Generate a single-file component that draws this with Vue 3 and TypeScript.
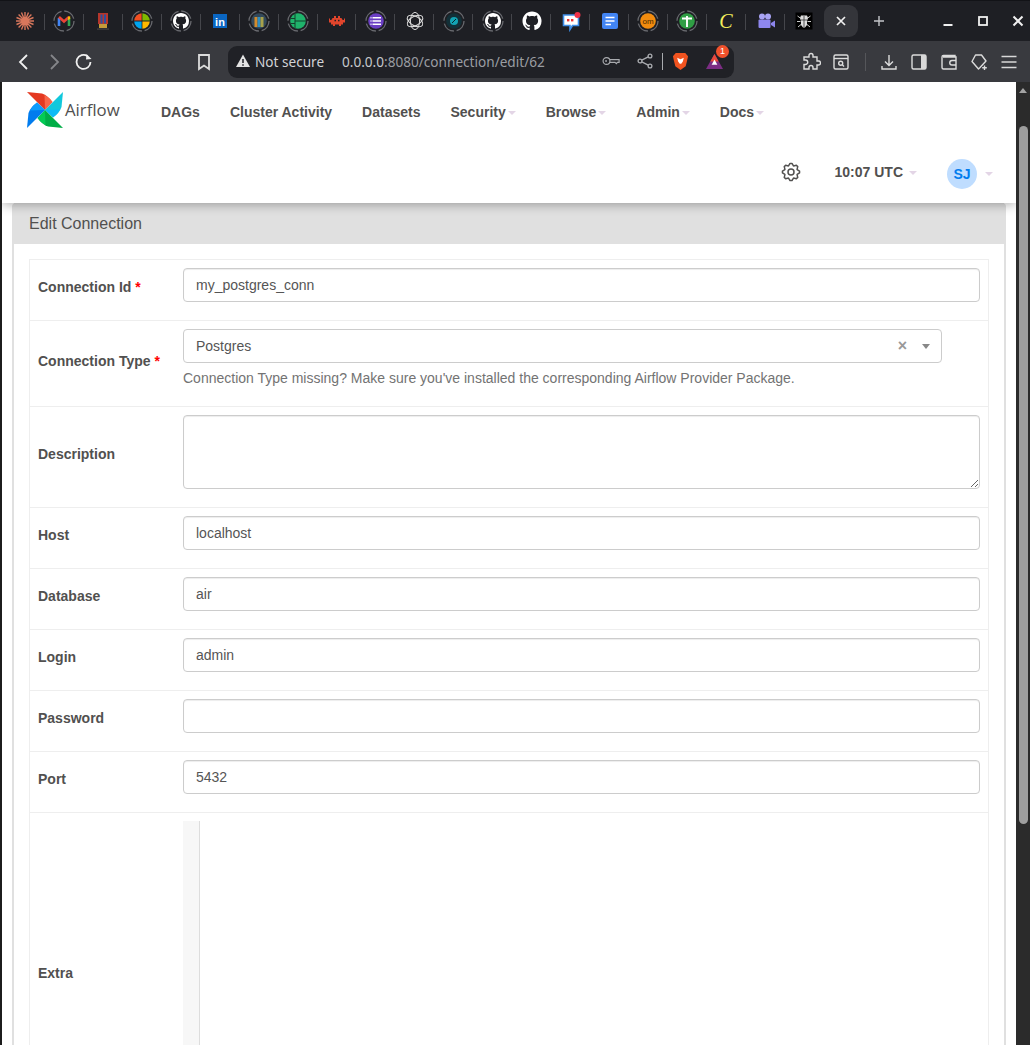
<script setup lang="ts">
// Eight pointed gear outline for the settings button
const gearPath = (() => {
  const pts: string[] = [];
  for (let i = 0; i < 8; i++) {
    const a = (Math.PI / 4) * i - Math.PI / 2;
    const step = Math.PI / 11;
    const corners: [number, number][] = [
      [6.6, a - step * 1.35],
      [8.6, a - step * 0.4],
      [8.6, a + step * 0.4],
      [6.6, a + step * 1.35],
    ];
    for (const [r, t] of corners) {
      pts.push(`${(10 + r * Math.cos(t)).toFixed(2)} ${(10 + r * Math.sin(t)).toFixed(2)}`);
    }
  }
  return `M${pts.join('L')}Z`;
})();

const github =
  'M8 0C3.58 0 0 3.58 0 8c0 3.54 2.29 6.53 5.47 7.59.4.07.55-.17.55-.38 0-.19-.01-.82-.01-1.49-2.01.37-2.53-.49-2.69-.94-.09-.23-.48-.94-.82-1.13-.28-.15-.68-.52-.01-.53.63-.01 1.08.58 1.23.82.72 1.21 1.87.87 2.33.66.07-.52.28-.87.51-1.07-1.78-.2-3.64-.89-3.64-3.95 0-.87.31-1.59.82-2.15-.08-.2-.36-1.02.08-2.12 0 0 .67-.21 2.2.82.64-.18 1.32-.27 2-.27.68 0 1.36.09 2 .27 1.53-1.04 2.2-.82 2.2-.82.44 1.1.16 1.92.08 2.12.51.56.82 1.28.82 2.15 0 3.07-1.87 3.75-3.65 3.95.29.25.54.73.54 1.48 0 1.07-.01 1.93-.01 2.2 0 .21.15.46.55.38A8.013 8.013 0 0016 8c0-4.42-3.58-8-8-8z';

const navItems = [
  { label: 'DAGs', caret: false },
  { label: 'Cluster Activity', caret: false },
  { label: 'Datasets', caret: false },
  { label: 'Security', caret: true },
  { label: 'Browse', caret: true },
  { label: 'Admin', caret: true },
  { label: 'Docs', caret: true },
];

const fields = [
  { label: 'Connection Id', kind: 'input', value: 'my_postgres_conn', required: true },
  { label: 'Connection Type', kind: 'select', value: 'Postgres', required: true },
  { label: 'Description', kind: 'textarea', value: '', required: false },
  { label: 'Host', kind: 'input', value: 'localhost', required: false },
  { label: 'Database', kind: 'input', value: 'air', required: false },
  { label: 'Login', kind: 'input', value: 'admin', required: false },
  { label: 'Password', kind: 'input', value: '', required: false },
  { label: 'Port', kind: 'input', value: '5432', required: false },
  { label: 'Extra', kind: 'code', value: '', required: false },
];

const ringDash = '12.9 2.8';
</script>

<template>
  <div class="screen">
    <!-- Browser tab strip: a row of pinned tabs -->
    <div class="tabstrip">
      <div class="pin"><svg viewBox="0 0 24 24"><path d="M12 3V21M3 12H21M5.6 5.6L18.4 18.4M5.6 18.4L18.4 5.6M8.5 3.5L15.5 20.5M15.5 3.5L8.5 20.5M3.5 8.5L20.5 15.5M3.5 15.5L20.5 8.5" stroke="#d8775c" stroke-width="1.4" fill="none" /></svg></div>
      <div class="pin"><svg viewBox="0 0 24 24"><circle cx="12" cy="12" r="10" class="ring" :stroke-dasharray="ringDash" /><path d="M7 17V9" stroke="#4285f4" stroke-width="2.6" /><path d="M7 8L12 12.5L17 8" stroke="#ea4335" stroke-width="2.6" fill="none" /><path d="M17 9V17" stroke="#34a853" stroke-width="2.6" /><path d="M16 7.6L18.2 7.2V10L16 11Z" fill="#fbbc04" /></svg></div>
      <div class="pin"><svg viewBox="0 0 24 24"><rect x="7" y="4" width="10" height="11" fill="#b5362c" /><rect x="9.5" y="5.5" width="2" height="9" fill="#2c4f9e" /><rect x="13" y="5.5" width="2" height="9" fill="#2c4f9e" /><rect x="8" y="15" width="8" height="4" fill="#c49a3a" /><rect x="6" y="19.5" width="12" height="1.2" fill="#444" /></svg></div>
      <div class="pin"><svg viewBox="0 0 24 24"><circle cx="12" cy="12" r="10" class="ring" :stroke-dasharray="ringDash" /><path d="M11.6 11.6V4.2A7.8 7.8 0 0 0 4.2 11.6Z" fill="#f25022" /><path d="M12.4 11.6V4.2A7.8 7.8 0 0 1 19.8 11.6Z" fill="#7fba00" /><path d="M11.6 12.4V19.8A7.8 7.8 0 0 1 4.2 12.4Z" fill="#00a4ef" /><path d="M12.4 12.4V19.8A7.8 7.8 0 0 0 19.8 12.4Z" fill="#ffb900" /></svg></div>
      <div class="pin"><svg viewBox="0 0 24 24"><circle cx="12" cy="12" r="10" class="ring" :stroke-dasharray="ringDash" /><path :d="github" fill="#fff" transform="translate(4 4)" /></svg></div>
      <div class="pin"><svg viewBox="0 0 24 24"><rect x="5" y="5" width="14" height="14" fill="#0a66c2" /><text x="12" y="16.5" text-anchor="middle" class="in">in</text></svg></div>
      <div class="pin"><svg viewBox="0 0 24 24"><circle cx="12" cy="12" r="10" class="ring" :stroke-dasharray="ringDash" /><circle cx="12" cy="12" r="7.8" fill="#33495a" /><path d="M7.5 8H10.5V18H7.5Z" fill="#d38b2c" /><path d="M10.6 8H13.4V18H10.6Z" fill="#2f8fc2" /><path d="M13.5 8H16.5V18H13.5Z" fill="#a9a24a" /></svg></div>
      <div class="pin"><svg viewBox="0 0 24 24"><circle cx="12" cy="12" r="10" class="ring" :stroke-dasharray="ringDash" /><circle cx="12" cy="12" r="7.8" fill="#1fb36b" /><path d="M9 5V19M9 12H20M4.5 9.5H9M4.5 14.5H9" stroke="#14402c" stroke-width="1" /></svg></div>
      <div class="pin"><svg viewBox="0 0 24 24"><path d="M9 7H11V9H13V7H15V9H16.5C17 10 17.5 11 18 11H19V9.5H20V13.5H18V15.5H16V17H14V15.5H10V17H8V15.5H6V13.5H4V9.5H5V11H6C6.5 11 7 10 7.5 9H9Z" fill="#e0452c" /><rect x="9.5" y="10.8" width="1.5" height="1.5" fill="#1f2025" /><rect x="13" y="10.8" width="1.5" height="1.5" fill="#1f2025" /></svg></div>
      <div class="pin"><svg viewBox="0 0 24 24"><circle cx="12" cy="12" r="10" class="ring" :stroke-dasharray="ringDash" /><circle cx="12" cy="12" r="7.8" fill="#6b3fc4" /><path d="M8.5 8.8H17M8.5 12H17M8.5 15.2H17M6.5 8.8H7.5M6.5 12H7.5M6.5 15.2H7.5" stroke="#fff" stroke-width="1.5" /></svg></div>
      <div class="pin"><svg viewBox="0 0 24 24" fill="none" stroke="#dcdcdc" stroke-width="1"><ellipse cx="12" cy="12" rx="4.6" ry="8.6" /><ellipse cx="12" cy="12" rx="4.6" ry="8.6" transform="rotate(60 12 12)" /><ellipse cx="12" cy="12" rx="4.6" ry="8.6" transform="rotate(120 12 12)" /></svg></div>
      <div class="pin"><svg viewBox="0 0 24 24"><circle cx="12" cy="12" r="10" class="ring" :stroke-dasharray="ringDash" /><circle cx="12" cy="12" r="7.8" fill="#123038" /><circle cx="12" cy="12" r="4" fill="#12a3b4" /><path d="M10 14L14 10" stroke="#0a2228" stroke-width="1" /></svg></div>
      <div class="pin"><svg viewBox="0 0 24 24"><circle cx="12" cy="12" r="10" class="ring" :stroke-dasharray="ringDash" /><path :d="github" fill="#fff" transform="translate(4 4)" /></svg></div>
      <div class="pin"><svg viewBox="0 0 24 24"><path :d="github" fill="#fff" transform="translate(2.5 2.5) scale(1.19)" /></svg></div>
      <div class="pin"><svg viewBox="0 0 24 24"><path d="M4.5 6H19.5V16.5H13.5L11 20.5V16.5H4.5Z" fill="#fff" stroke="#3f8ee8" stroke-width="1.6" /><rect x="8" y="10" width="2.4" height="2.4" fill="#e33" /><rect x="12" y="10" width="2.4" height="2.4" fill="#e33" /><circle cx="18.5" cy="6" r="3" fill="#f0324a" /></svg></div>
      <div class="pin"><svg viewBox="0 0 24 24"><rect x="4" y="4" width="16" height="16" rx="2" fill="#4285f4" /><path d="M7.5 8.5H16.5M7.5 12H16.5M7.5 15.5H13" stroke="#fff" stroke-width="1.7" /></svg></div>
      <div class="pin"><svg viewBox="0 0 24 24"><circle cx="12" cy="12" r="10" class="ring" :stroke-dasharray="ringDash" /><circle cx="12" cy="12" r="7.8" fill="#f28c0f" /><text x="12" y="14.8" text-anchor="middle" class="om">om</text></svg></div>
      <div class="pin"><svg viewBox="0 0 24 24"><circle cx="12" cy="12" r="10" class="ring" :stroke-dasharray="ringDash" /><circle cx="12" cy="12" r="7.8" fill="#2f9e44" /><path d="M7 9.5H17M12 7V18" stroke="#fff" stroke-width="1.9" /></svg></div>
      <div class="pin"><svg viewBox="0 0 24 24"><text x="12" y="18.5" text-anchor="middle" class="cee">C</text></svg></div>
      <div class="pin"><svg viewBox="0 0 24 24"><circle cx="9" cy="7.5" r="3" fill="#a9a4f5" /><circle cx="15" cy="7.5" r="3" fill="#a9a4f5" /><rect x="5.5" y="10.5" width="12" height="8.5" rx="1" fill="#8d86ee" /><path d="M18 14L22 11.5V18.5L18 16Z" fill="#8d86ee" /></svg></div>
      <div class="pin last"><svg viewBox="0 0 24 24"><rect x="3.5" y="3.5" width="17" height="17" fill="#000" /><path d="M9 6.5H15L16 9L15 12V16L13 18.5H11L9 16V12L8 9Z" fill="#ddd" /><path d="M5.5 7L9 9.5M18.5 7L15 9.5M5 12.5H8.5M19 12.5H15.5M6 18L9 15.5M18 18L15 15.5" stroke="#ccc" stroke-width="1" /><path d="M12 7V18M9 11H15" stroke="#333" stroke-width="0.8" /></svg></div>
      <div class="tab">
        <svg viewBox="0 0 12 12" width="12" height="12"><path d="M2 2L10 10M10 2L2 10" stroke="#f0f0f0" stroke-width="1.7" /></svg>
      </div>
      <svg class="plus" viewBox="0 0 12 12" width="12" height="12"><path d="M6 1V11M1 6H11" stroke="#c4c5c9" stroke-width="1.4" /></svg>
      <div class="window-buttons">
        <svg viewBox="0 0 12 12" width="12" height="12"><path d="M1.5 10H10.5" stroke="#f0f0f0" stroke-width="2" /></svg>
        <svg viewBox="0 0 12 12" width="12" height="12"><rect x="2" y="2" width="8" height="8" fill="none" stroke="#f0f0f0" stroke-width="1.8" /></svg>
        <svg viewBox="0 0 12 12" width="12" height="12"><path d="M1.5 1.5L10.5 10.5M10.5 1.5L1.5 10.5" stroke="#f0f0f0" stroke-width="2" /></svg>
      </div>
    </div>

    <!-- Browser toolbar -->
    <div class="toolbar">
      <button class="tool"><svg viewBox="0 0 20 20" width="20" height="20"><path d="M13 3L6 10L13 17" class="line bright" /></svg></button>
      <button class="tool"><svg viewBox="0 0 20 20" width="20" height="20"><path d="M7 3L14 10L7 17" class="line dim" /></svg></button>
      <button class="tool"><svg viewBox="0 0 20 20" width="20" height="20"><path d="M16.5 10A7 7 0 1 1 13.5 4.2" class="line bright" /><path d="M12.5 2L17.5 7L12 7.6Z" fill="#f0f0f0" /></svg></button>
      <button class="tool bookmark"><svg viewBox="0 0 20 20" width="20" height="20"><path d="M5 3H15V17L10 13.5L5 17Z" class="line soft" /></svg></button>

      <div class="omnibox">
        <svg class="warn" viewBox="0 0 16 16" width="16" height="16"><path d="M8 1.5L15 14H1Z" fill="#e3e3e3" /><path d="M8 6V10M8 11.3V12.8" stroke="#202126" stroke-width="1.5" /></svg>
        <span class="not-secure">Not secure</span>
        <span class="url"><span class="host">0.0.0.0</span>:8080/connection/edit/62</span>
        <svg class="key" viewBox="0 0 20 12" width="18" height="12"><circle cx="5" cy="6" r="3.8" class="thin" /><circle cx="4.5" cy="6" r="1" fill="#a9abaf" /><path d="M8.8 4.5H19V7.5H17L16 9L14.5 7.5H8.8" class="thin" /></svg>
        <svg class="share" viewBox="0 0 16 16" width="16" height="16"><circle cx="3" cy="8" r="1.9" class="thin" /><circle cx="13" cy="3" r="1.9" class="thin" /><circle cx="13" cy="13" r="1.9" class="thin" /><path d="M4.8 7.2L11.2 3.9M4.8 8.8L11.2 12.1" class="thin" /></svg>
        <span class="omni-sep"></span>
        <svg class="lion" viewBox="0 0 18 20" width="17" height="19"><path d="M4 1H14L17 4.5L16 9L14.5 15L9 19L3.5 15L2 9L1 4.5Z" fill="#f1531f" /><path d="M5.5 6L9 7.5L12.5 6L11.5 10L9.8 12.5H8.2L6.5 10Z" fill="#fff" /></svg>
        <span class="bat">
          <svg viewBox="0 0 20 18" width="19" height="17"><path d="M10 1L19 17H1Z" fill="#7b2d83" /><path d="M10 1L14.5 9H5.5Z" fill="#e8493a" /><path d="M10 7L13 12.5H7Z" fill="#fff" /></svg>
          <b class="badge">1</b>
        </span>
      </div>

      <button class="tool puzzle"><svg viewBox="0 0 20 20" width="20" height="20"><path d="M8 3.5A2 2 0 0 1 12 3.5V5H16V9H17.5A2 2 0 0 1 17.5 13H16V17H12V15.5A2 2 0 0 0 8 15.5V17H3V12.5H4.5A2.2 2.2 0 0 0 4.5 8H3V5H8Z" class="line soft thin-line" /></svg></button>
      <button class="tool"><svg viewBox="0 0 20 20" width="20" height="20"><rect x="3" y="3" width="14" height="14" rx="1.5" class="line soft thin-line" /><path d="M3 6.5H17" class="line soft thin-line" /><circle cx="9.7" cy="11.2" r="2" class="line soft thin-line" /><path d="M11.3 12.8L13 14.4" class="line soft thin-line" /></svg></button>
      <span class="tool-sep"></span>
      <button class="tool"><svg viewBox="0 0 20 20" width="20" height="20"><path d="M10 3V13M6 9.5L10 13.5L14 9.5M3 14V17H17V14" class="line soft thin-line" /></svg></button>
      <button class="tool"><svg viewBox="0 0 20 20" width="20" height="20"><rect x="3" y="3" width="14" height="14" rx="1.5" class="line soft thin-line" /><rect x="12" y="3" width="5" height="14" fill="#d8d8d8" /></svg></button>
      <button class="tool"><svg viewBox="0 0 20 20" width="20" height="20"><path d="M16 5V3.5H4.5A1.5 1.5 0 0 0 3 5V15.5A1.5 1.5 0 0 0 4.5 17H17V5H4" class="line soft thin-line" /><path d="M17 8.5H13A1.5 1.5 0 0 0 13 13H17" class="line soft thin-line" /></svg></button>
      <button class="tool"><svg viewBox="0 0 20 20" width="20" height="20"><path d="M6.5 3H12.5L17 9L11 15.5L9.5 17L3 9.5Z" class="line soft thin-line" stroke-linejoin="round" /><path d="M15.5 13.5V18M13.2 15.8H17.8" class="line soft thin-line" /></svg></button>
      <button class="tool"><svg viewBox="0 0 20 20" width="20" height="20"><path d="M2.5 4.5H17.5M2.5 10H17.5M2.5 15.5H17.5" stroke="#d8d8d8" stroke-width="1.6" /></svg></button>
    </div>

    <div class="viewport">
      <div class="page">
        <!-- Airflow navbar, wrapped onto two lines at this width -->
        <header class="navbar">
          <div class="nav-main">
            <a class="brand">
              <svg viewBox="0 0 36 36" width="36" height="36">
                <g v-for="(blade, i) in [['#e43921', '#ff7557'], ['#11c8dc', '#0cb6ff'], ['#00ad46', '#04d659'], ['#017cee', '#11a7ff']]" :key="i" :transform="`rotate(${i * 90} 18 18)`">
                  <path d="M0 0L15 1.5Q21 3.5 25.5 10L18 18Z" :fill="blade[0]" />
                  <path d="M18 18L25.5 10Q22.5 5.5 17.5 3Z" :fill="blade[1]" opacity="0.75" />
                </g>
              </svg>
              <span class="wordmark">Airflow</span>
            </a>
            <nav class="nav-links">
              <a v-for="item in navItems" :key="item.label" class="nav-link">
                {{ item.label }}<i v-if="item.caret" class="caret"></i>
              </a>
            </nav>
          </div>
          <div class="nav-right">
            <svg class="gear" viewBox="0 0 20 20" width="20" height="20"><path :d="gearPath" fill="none" stroke="#51504f" stroke-width="1.5" stroke-linejoin="round" /><circle cx="10" cy="10" r="3" fill="none" stroke="#51504f" stroke-width="1.5" /></svg>
            <span class="clock">10:07 UTC<i class="caret wide"></i></span>
            <span class="user"><span class="avatar">SJ</span><i class="caret"></i></span>
          </div>
        </header>

        <section class="panel">
          <h4 class="panel-title">Edit Connection</h4>
          <div class="panel-body">
            <div class="form-table">
              <div v-for="field in fields" :key="field.label" class="row">
                <label class="field-label">{{ field.label }}<strong v-if="field.required" class="req"> *</strong></label>
                <div class="field-value">
                  <input v-if="field.kind === 'input'" class="control" type="text" :value="field.value" />
                  <template v-else-if="field.kind === 'select'">
                    <div class="select">
                      <span>{{ field.value }}</span>
                      <span class="clear">×</span>
                      <i class="select-arrow"></i>
                    </div>
                    <p class="help">Connection Type missing? Make sure you've installed the corresponding Airflow Provider Package.</p>
                  </template>
                  <textarea v-else-if="field.kind === 'textarea'" class="control area"></textarea>
                  <div v-else class="code"><div class="gutter"></div></div>
                </div>
              </div>
            </div>
          </div>
        </section>
      </div>

      <!-- Page scrollbar -->
      <div class="scrollbar">
        <i class="scroll-up"></i>
        <div class="thumb"></div>
      </div>
    </div>
  </div>
</template>

<style scoped>
.screen {
  width: 1030px;
  height: 1045px;
  overflow: hidden;
  background: #1d1e22;
  font-family: "Liberation Sans", Arial, sans-serif;
}

.tabstrip {
  height: 41px;
  box-sizing: border-box;
  padding: 1px 0 0 6px;
  display: flex;
  align-items: flex-start;
  background: #1e1f24;
  border-top: 1px solid #121317;
}

.pin {
  width: 38.95px;
  height: 38px;
  display: flex;
  align-items: center;
  justify-content: center;
  position: relative;
  flex: none;
}

.pin svg {
  width: 24px;
  height: 24px;
}

.pin::after {
  content: "";
  position: absolute;
  right: 0;
  top: 12px;
  width: 1px;
  height: 16px;
  background: #45464b;
}

.pin.last::after {
  display: none;
}

.ring {
  fill: none;
  stroke: #6a6b70;
  stroke-width: 1.3;
}

.in {
  font: bold 11px "Liberation Sans", sans-serif;
  fill: #fff;
}

.om {
  font: 8px "Liberation Sans", sans-serif;
  fill: #4a2a00;
}

.cee {
  font: italic 20px "Liberation Serif", serif;
  fill: #f4ef5c;
}

.tab {
  width: 34px;
  height: 32px;
  margin: 3px 0 0 0;
  border-radius: 9px;
  background: #34353a;
  display: flex;
  align-items: center;
  justify-content: center;
  flex: none;
}

.plus {
  margin: 13px 0 0 15px;
  flex: none;
}

.window-buttons {
  margin: 13px 0 0 57px;
  display: flex;
  gap: 23px;
}

.toolbar {
  height: 41px;
  box-sizing: border-box;
  padding-left: 9px;
  display: flex;
  align-items: center;
  background: #393a3f;
}

.tool {
  width: 30px;
  height: 30px;
  padding: 0;
  flex: none;
  border: 0;
  background: none;
  display: flex;
  align-items: center;
  justify-content: center;
}

.line {
  fill: none;
  stroke-width: 1.8;
}

.bright {
  stroke: #f0f0f0;
}

.dim {
  stroke: #85868a;
}

.soft {
  stroke: #dcdcdc;
}

.thin-line {
  stroke-width: 1.4;
}

.bookmark {
  margin-left: 90px;
}

.omnibox {
  width: 506px;
  height: 32px;
  box-sizing: border-box;
  padding-bottom: 1px;
  margin-left: 9px;
  flex: none;
  display: flex;
  align-items: center;
  border-radius: 9px;
  background: #202126;
  font-family: "Noto Sans", sans-serif;
  font-size: 13.6px;
  color: #c8cacd;
  position: relative;
}

.warn {
  margin-left: 7px;
  flex: none;
}

.not-secure {
  margin-left: 4px;
  width: 87px;
  color: #d2d3d6;
}

.url {
  width: 260px;
  color: #9a9da2;
}

.host {
  color: #c6c9cd;
}

.thin {
  fill: none;
  stroke: #a9abaf;
  stroke-width: 1.3;
}

.key {
  flex: none;
}

.share {
  margin-left: 17px;
  flex: none;
}

.omni-sep {
  width: 1px;
  height: 17px;
  margin-left: 9px;
  background: #a9abaf;
}

.lion {
  margin-left: 9px;
  flex: none;
}

.bat {
  margin-left: 16px;
  position: relative;
  display: flex;
}

.badge {
  position: absolute;
  left: 11px;
  top: -8px;
  width: 13px;
  height: 13px;
  border-radius: 50%;
  background: #f0512c;
  color: #fff;
  font: 9px/13px "Liberation Sans", sans-serif;
  text-align: center;
}

.puzzle {
  margin-left: 62px;
}

.tool-sep {
  width: 1px;
  height: 18px;
  margin: 0 8px 0 9px;
  background: #55565a;
  flex: none;
}

.viewport {
  height: 963px;
  padding-left: 2px;
  display: flex;
  overflow: hidden;
  background: #1c1c1c;
}

.page {
  width: 1014px;
  flex: none;
  background: #fff;
  overflow: hidden;
}

.navbar {
  height: 121px;
  position: relative;
  z-index: 2;
  background: #fff;
  box-shadow: 0 2px 10px rgba(0, 0, 0, 0.3);
  color: #51504f;
  font-size: 14px;
  font-weight: 700;
}

.nav-main {
  height: 60px;
  display: flex;
  align-items: center;
}

.brand {
  margin-left: 25px;
  width: 134px;
  display: flex;
  align-items: center;
}

.brand svg {
  flex: none;
  margin-top: -4px;
}

.wordmark {
  margin: -6px 0 0 2px;
  font-family: "Open Sans", sans-serif;
  font-size: 16.8px;
  font-weight: 400;
  color: #51504f;
}

.nav-links {
  display: flex;
  gap: 30px;
}

.nav-link {
  white-space: nowrap;
}

.caret {
  display: inline-block;
  width: 0;
  height: 0;
  margin-left: 2px;
  vertical-align: 2px;
  border-top: 4px solid #e3d5e6;
  border-left: 4px solid transparent;
  border-right: 4px solid transparent;
}

.caret.wide {
  margin-left: 6px;
}

.nav-right {
  height: 61px;
  padding-right: 23px;
  display: flex;
  align-items: center;
  justify-content: flex-end;
}

.gear {
  margin-right: 34px;
  margin-top: -2px;
}

.clock {
  margin-right: 30px;
  margin-top: -1px;
}

.user {
  display: flex;
  align-items: center;
  gap: 6px;
  margin-top: 2px;
}

.avatar {
  width: 30px;
  height: 30px;
  border-radius: 50%;
  background: #bfddff;
  color: #017cee;
  line-height: 30px;
  text-align: center;
}

.panel {
  margin: 0 10px;
  border: 2px solid #e0e0e0;
  border-top: 0;
  border-radius: 4px 4px 0 0;
  color: #51504f;
}

.panel-title {
  margin: 0;
  padding: 0 15px;
  height: 41px;
  background: #e0e0e0;
  font-size: 16px;
  font-weight: 400;
  line-height: 41px;
}

.panel-body {
  padding: 15px 15px 0;
}

.form-table {
  border: 1px solid #eee;
}

.row {
  display: grid;
  grid-template-columns: 145px 1fr;
  align-items: center;
  border-top: 1px solid #eee;
}

.row:first-child {
  border-top: 0;
}

.field-label {
  margin-bottom: 6px;
  padding-left: 8px;
  font-size: 14px;
  font-weight: 700;
  line-height: 20px;
}

.req {
  color: #f00;
}

.field-value {
  padding: 8px 8px 18px;
}

.control {
  display: block;
  width: 100%;
  height: 34px;
  box-sizing: border-box;
  padding: 6px 12px;
  border: 1px solid #ccc;
  border-radius: 4px;
  box-shadow: inset 0 1px 1px rgba(0, 0, 0, 0.075);
  font: 14px/20px "Liberation Sans", Arial, sans-serif;
  color: #555;
  outline: none;
}

.area {
  height: 74px;
  resize: vertical;
}

.select {
  width: 759px;
  height: 34px;
  box-sizing: border-box;
  padding: 0 11px 0 12px;
  display: flex;
  align-items: center;
  border: 1px solid #ccc;
  border-radius: 4px;
  font-size: 14px;
  color: #555;
}

.clear {
  margin-left: auto;
  color: #999;
  font-size: 16px;
  font-weight: 700;
}

.select-arrow {
  margin: 0 0 0 15px;
  border-top: 5px solid #888;
  border-left: 4px solid transparent;
  border-right: 4px solid transparent;
}

.help {
  margin: 5px 0 0;
  font-size: 14px;
  line-height: 20px;
  color: #737373;
}

.code {
  height: 300px;
}

.gutter {
  width: 16px;
  height: 100%;
  background: #f7f7f7;
  border-right: 1px solid #ddd;
}

.scrollbar {
  flex: 1;
  padding-top: 44px;
  position: relative;
  background: #2b2b2b;
}

.scroll-up {
  position: absolute;
  top: 6px;
  left: 3px;
  border-bottom: 5px solid #a3a3a3;
  border-left: 4.5px solid transparent;
  border-right: 4.5px solid transparent;
}

.thumb {
  width: 9px;
  height: 698px;
  margin-left: 3px;
  border-radius: 5px;
  background: #9e9e9e;
}
</style>

<style>
html,
body {
  overflow: hidden;
  background: #1d1e22;
}
</style>
